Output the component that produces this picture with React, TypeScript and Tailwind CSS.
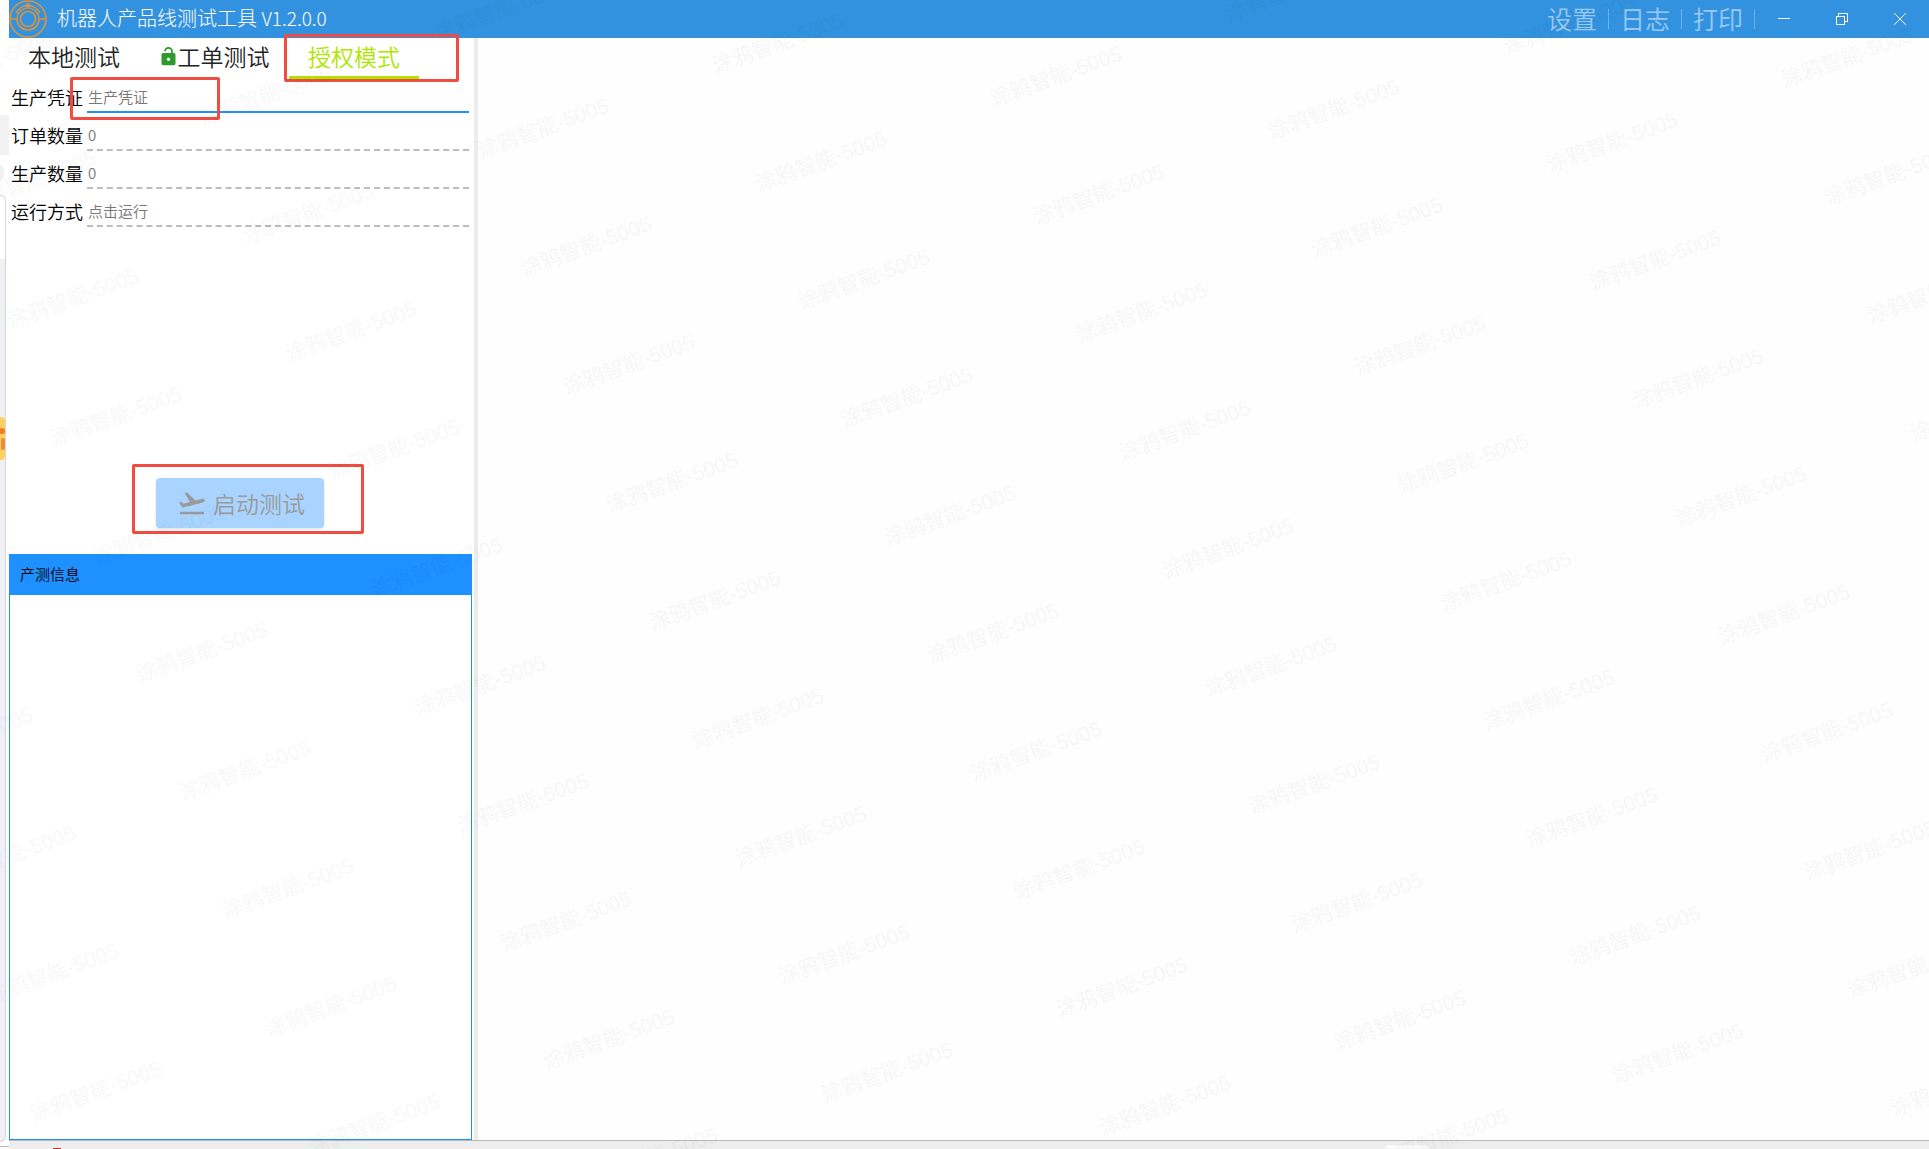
import React from 'react';
import { MdFlightTakeoff } from 'react-icons/md';

const MENU = ['设置', '日志', '打印'];

const FIELDS = [
  { id: 'order-count', label: '订单数量', placeholder: '0' },
  { id: 'produced-count', label: '生产数量', placeholder: '0' },
  { id: 'run-mode', label: '运行方式', placeholder: '点击运行' },
];

// Watermark lattice: each mark steps by `COL` across and by `ROW` down.
const ORIGIN = { x: 586, y: 246 };
const COL = { x: 278, y: 33 };
const ROW = { x: 43, y: 118 };

const MARKS: { x: number; y: number }[] = [];
for (let row = -8; row <= 9; row++) {
  for (let col = -5; col <= 8; col++) {
    const x = ORIGIN.x + col * COL.x + row * ROW.x;
    const y = ORIGIN.y + col * COL.y + row * ROW.y;
    if (x > -70 && x < 1990 && y > -10 && y < 1170) MARKS.push({ x, y });
  }
}

function Watermark() {
  return (
    <div aria-hidden="true" className="pointer-events-none absolute inset-0 z-20 overflow-hidden opacity-[0.024]">
      {MARKS.map((m) => (
        <span
          key={`${m.x}:${m.y}`}
          className="absolute -translate-x-1/2 -translate-y-1/2 -rotate-20 font-['Liberation_Sans','Noto_Sans_CJK_SC',sans-serif] text-[21px] leading-none whitespace-nowrap text-black"
          style={{ left: m.x, top: m.y }}
        >
          涂鸦智能-5005
        </span>
      ))}
    </div>
  );
}

function Logo() {
  return (
    <svg viewBox="0 0 38 38" className="size-[38px]" fill="none" stroke="#d9933f" strokeWidth="1.700" aria-hidden="true">
      <circle cx="19" cy="19" r="18" />
      <circle cx="19" cy="19" r="7.500" />
      <path d="M1 19h7a11 11 0 0 0 22 0h7" />
      <path d="M8 19a11 11 0 0 1 22 0" strokeWidth="1.200" />
      <path d="M7 13C10 8 14 5.500 19 5.500s9 2.500 12 7.500" strokeWidth="1.500" />
      <circle cx="19" cy="5.500" r="2.200" fill="#d9933f" stroke="none" />
    </svg>
  );
}

function LockOpen() {
  return (
    <svg viewBox="0 0 24 24" className="-mx-[3px] size-[21px]" fill="#2e9a2e" aria-hidden="true">
      <path d="M18 8a2 2 0 0 1 2 2v10a2 2 0 0 1-2 2H6a2 2 0 0 1-2-2V10c0-1.110.9-2 2-2h9V6a3 3 0 0 0-6 0H7a5 5 0 0 1 10 0v2h1m-6 9a2 2 0 1 0 0-4 2 2 0 0 0 0 4Z" />
    </svg>
  );
}

function TitleBar() {
  return (
    <header className="flex h-[38px] shrink-0 items-center bg-[#3392df] text-white">
      <Logo />
      <h1 className="ml-2.5 pb-0.5 text-xl leading-none font-light">
        机器人产品线测试工具 <span className="text-[19px] leading-none">V1.2.0.0</span>
      </h1>
      <nav className="ml-auto flex items-center">
        {MENU.map((item) => (
          <button
            key={item}
            type="button"
            className="flex h-5 w-[73px] items-center justify-center border-r border-[#6fb2e8] pb-0.5 text-[25px] leading-none font-[350] text-[#9bcaf2]"
          >
            {item}
          </button>
        ))}
      </nav>
      <div className="flex">
        <button type="button" aria-label="最小化" className="flex h-[38px] w-[58px] items-center justify-center">
          <svg viewBox="0 0 12 12" className="size-3" stroke="currentColor" shapeRendering="crispEdges" aria-hidden="true">
            <path d="M0 5.500h12" />
          </svg>
        </button>
        <button type="button" aria-label="还原" className="flex h-[38px] w-[58px] items-center justify-center">
          <svg viewBox="0 0 12 12" className="size-3" fill="none" stroke="currentColor" shapeRendering="crispEdges" aria-hidden="true">
            <path d="M.5 3.500h8v8h-8zM2.500 3.500v-3h9v8h-3" />
          </svg>
        </button>
        <button type="button" aria-label="关闭" className="flex h-[38px] w-[58px] items-center justify-center">
          <svg viewBox="0 0 12 12" className="size-3" stroke="currentColor" aria-hidden="true">
            <path d="M0 0l12 12M12 0L0 12" />
          </svg>
        </button>
      </div>
    </header>
  );
}

function Tabs() {
  return (
    <div role="tablist" className="flex h-[41px] shrink-0 text-[23px] leading-none font-[350] text-[#222]">
      <button type="button" role="tab" aria-selected="false" className="w-[130px] pb-1">
        本地测试
      </button>
      <button type="button" role="tab" aria-selected="false" className="flex w-[150px] items-center justify-center gap-0.5 pb-1 pl-0.5 whitespace-nowrap">
        <LockOpen />
        <span>工单测试</span>
      </button>
      <div className="relative">
        <button type="button" role="tab" aria-selected="true" className="h-full w-[130px] border-b-3 border-[#aee600] pb-0.5 text-[#aee600]">
          授权模式
        </button>
        <div className="pointer-events-none absolute -top-1 -left-[5px] h-12 w-[175px] rounded-xs border-3 border-[#f14c41]" />
      </div>
    </div>
  );
}

function Form() {
  return (
    <form className="mr-[5px] ml-0.5 text-lg leading-none font-[350] text-black">
      <div className="flex h-[34px] items-stretch gap-1 pt-1">
        <label htmlFor="voucher" className="flex w-[72px] shrink-0 items-center pb-0.5 whitespace-nowrap">
          生产凭证
        </label>
        <div className="relative flex flex-1 border-b-2 border-[#2390fa]">
          <input
            id="voucher"
            placeholder="生产凭证"
            className="w-full bg-transparent pb-0.5 pl-px text-[15px] leading-none outline-none placeholder:text-[#777]"
          />
          <div className="pointer-events-none absolute -top-1.5 -left-[17px] h-[43px] w-[150px] rounded-xs border-3 border-[#f14c41]" />
        </div>
      </div>
      {FIELDS.map((f) => (
        <div key={f.id} className="flex h-[38px] items-stretch gap-1 pt-2">
          <label htmlFor={f.id} className="flex w-[72px] shrink-0 items-center pb-0.5 whitespace-nowrap">
            {f.label}
          </label>
          <div className="flex flex-1 border-b-2 border-dashed border-[#bcbcbc]">
            <input
              id={f.id}
              readOnly
              placeholder={f.placeholder}
              className="w-full bg-transparent pb-0.5 pl-px text-[15px] leading-none outline-none placeholder:text-[#777]"
            />
          </div>
        </div>
      ))}
    </form>
  );
}

function Sidebar() {
  return (
    <aside className="flex w-[469px] shrink-0 flex-col border-r-4 border-[#ececec]">
      <Tabs />
      <Form />
      <div className="mt-[251px] flex pl-[147px]">
        <div className="relative">
          <button
            type="button"
            disabled
            className="flex h-[50px] w-[168px] items-center justify-center gap-1.5 rounded-sm bg-[#a9d4ff] pl-0.5 text-[23px] leading-none font-[350] whitespace-nowrap text-[#9a9a9a] shadow-sm"
          >
            <MdFlightTakeoff className="size-[30px]" aria-hidden="true" />
            启动测试
          </button>
          <div className="pointer-events-none absolute -top-3.5 -left-6 h-[70px] w-[232px] rounded-xs border-3 border-[#f14c41]" />
        </div>
      </div>
      <section className="mt-[26px] mr-0.5 flex flex-1 flex-col border border-[#1e90ff]">
        <h2 className="flex h-10 items-center bg-[#1e90ff] pb-1 pl-2.5 text-[15px] leading-none font-[350] text-black">
          产测信息
        </h2>
      </section>
    </aside>
  );
}

// Sliver of the window lying behind the tool's left edge.
function BackgroundEdge() {
  return (
    <div aria-hidden="true" className="flex w-[9px] shrink-0 flex-col overflow-hidden bg-white">
      <div className="mt-[115px] h-10 bg-[#f2f2f2]" />
      <div className="mt-1.5 -ml-5 size-6 rounded-full bg-[#f0f0f0]" />
      <div className="mt-2.5 mr-[3px] flex flex-1 flex-col rounded-r-lg border-t border-r border-b border-[#d5d7da] bg-[#eff1f7]">
        <div className="h-[63px] rounded-tr-lg bg-white" />
        <div className="mt-[158px] flex h-[43px] flex-col items-end justify-center gap-1 rounded-r-sm bg-[#ffd05c]">
          <div className="size-1.5 rounded-full bg-[#f47b20]" />
          <div className="h-3 w-1 rounded-full bg-[#f08a3c]" />
        </div>
      </div>
      <div className="mt-1 h-[3px] border-t border-[#bbb]" />
    </div>
  );
}

export default function App() {
  return (
    <div className="relative flex h-screen overflow-hidden bg-white font-['Noto_Sans_CJK_SC',sans-serif]">
      <BackgroundEdge />
      <div className="flex min-w-0 flex-1 flex-col">
        <TitleBar />
        <div className="flex min-h-0 flex-1">
          <Sidebar />
          <main className="min-w-0 flex-1 bg-[#fefefe]" />
        </div>
        <footer className="flex h-[9px] shrink-0 items-end overflow-hidden border-t border-[#b9b9b9] bg-[#ededed]" aria-hidden="true">
          <div className="ml-[44px] h-px w-2 bg-[#d0261c]" />
          <div className="ml-[1324px] h-1 w-11 rounded-t-sm bg-[#fafafa]" />
        </footer>
      </div>
      <Watermark />
    </div>
  );
}
